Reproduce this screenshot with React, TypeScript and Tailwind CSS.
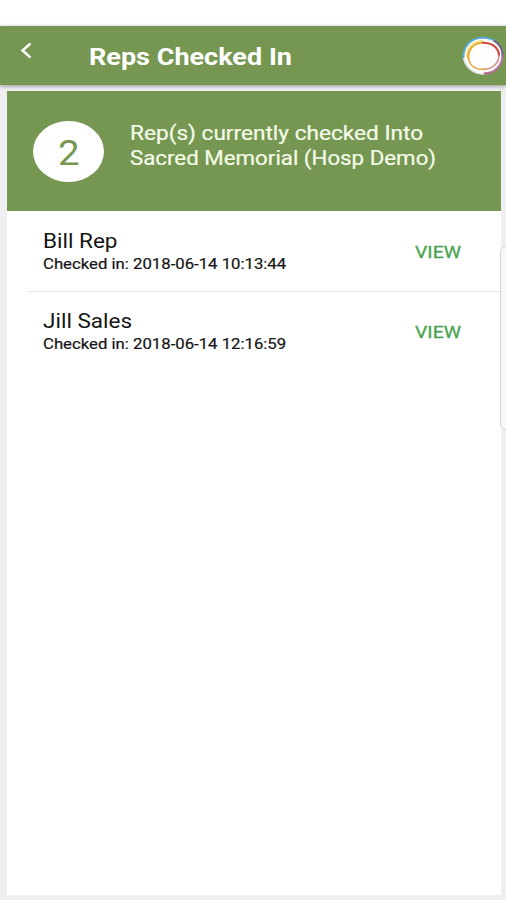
const reps = [
  { name: "Bill Rep", checkedIn: "2018-06-14 10:13:44" },
  { name: "Jill Sales", checkedIn: "2018-06-14 12:16:59" },
]

function Logo() {
  return (
    <svg className="w-[44px] h-[42px] shrink-0" viewBox="0 0 44 42" fill="none">
      <ellipse cx="22" cy="21" rx="20" ry="18.500" fill="#fff" />
      <path d="M2.500 23C2 11 10 2.800 22 2.800c5 0 9 1 12 3.500" stroke="#58abd0" strokeWidth="2" />
      <path d="M33 5.500c6 4 9 9 8.500 16" stroke="#6f5c90" strokeWidth="2" />
      <path d="M41.500 20c0 10-7 18.500-19 18.500" stroke="#bb6a9c" strokeWidth="2" />
      <path d="M23 39C14 39.500 5 34 2.500 23" stroke="#d5e0e0" strokeWidth="1.200" />
      <path d="M6 23C5 13 12 6.500 22 6" stroke="#f5e07c" strokeWidth="2" />
      <path d="M7.500 24C6.500 14 13 8 22 7.800" stroke="#e5ae3c" strokeWidth="2" />
      <path d="M21 7.800c10-.5 17 5 17 13" stroke="#cf4a3c" strokeWidth="2.200" />
      <path d="M38 20c0 8-6 14-15 14.300" stroke="#dc8488" strokeWidth="1.500" />
      <path d="M25 34.300C15 35 8.500 31 7.500 23" stroke="#e5a748" strokeWidth="1.800" />
    </svg>
  )
}

function Header() {
  return (
    <header className="flex items-start h-[59px] shrink-0 bg-[#769752] shadow-[0_1px_4px_rgba(0,0,0,0.4)]">
      <button className="w-[89px] h-[48px] pl-[20px] text-white">
        <svg className="w-[13px] h-[17px]" viewBox="0 0 13 17" fill="none">
          <path d="M10.500 1.500L2.500 8.500L10.500 15.500" stroke="currentColor" strokeWidth="2.400" />
        </svg>
      </button>
      <h1 className="flex-1 pt-[15px] text-[23px] leading-[34px] font-bold text-white whitespace-nowrap origin-left scale-x-[1.175]">
        Reps Checked In
      </h1>
      <div className="w-[45px] shrink-0 pt-[9px]">
        <Logo />
      </div>
    </header>
  )
}

function Summary() {
  return (
    <section className="flex h-[120px] pl-[26px] bg-[#769752]">
      <div className="flex items-center justify-center w-[71px] h-[61px] mt-[30px] pt-[3px] rounded-[50%] bg-white shrink-0">
        <span className="text-[35px] leading-none text-[#769752] scale-x-[1.1]">{reps.length}</span>
      </div>
      <div className="ml-[26px] mt-[30px] text-[19.500px] leading-[25px] text-[#f4fbe9] [-webkit-text-stroke:0.2px] whitespace-nowrap">
        <p className="origin-left scale-x-[1.16]">Rep(s) currently checked Into</p>
        <p className="origin-left scale-x-[1.143]">Sacred Memorial (Hosp Demo)</p>
      </div>
    </section>
  )
}

export default function App() {
  return (
    <div className="relative flex flex-col w-[506px] h-[900px] overflow-hidden bg-[#efeff1] font-[Roboto,sans-serif]">
      <div className="h-[26px] shrink-0 bg-white" />
      <Header />
      <main className="flex-1 mt-[6px] mb-[5px] ml-[7px] mr-[5px] bg-white">
        <Summary />
        <ul>
          {reps.map((rep) => (
            <li
              key={rep.name}
              className="flex justify-between h-[80px] ml-[21px] pl-[15px] pr-[40px] shadow-[0_1px_0_#e6e6e6] last:shadow-none"
            >
              <div className="pt-[19px] text-[#161616] whitespace-nowrap">
                <p className="text-[19.500px] leading-[24px] origin-left scale-x-[1.155]">{rep.name}</p>
                <p className="text-[14px] leading-[20px] origin-left scale-x-[1.195] [-webkit-text-stroke:0.2px]">
                  Checked in: {rep.checkedIn}
                </p>
              </div>
              <button className="h-[82px] pt-[2px] text-[16.500px] text-[#4ca350] [-webkit-text-stroke:0.3px] origin-right scale-x-[1.18]">
                VIEW
              </button>
            </li>
          ))}
        </ul>
      </main>
      {/* Edge panel handle */}
      <div className="absolute left-[500px] top-[246px] w-[12px] h-[184px] rounded-[6px] border border-[#d4d4d8] bg-[#f7f7f8]" />
    </div>
  )
}
